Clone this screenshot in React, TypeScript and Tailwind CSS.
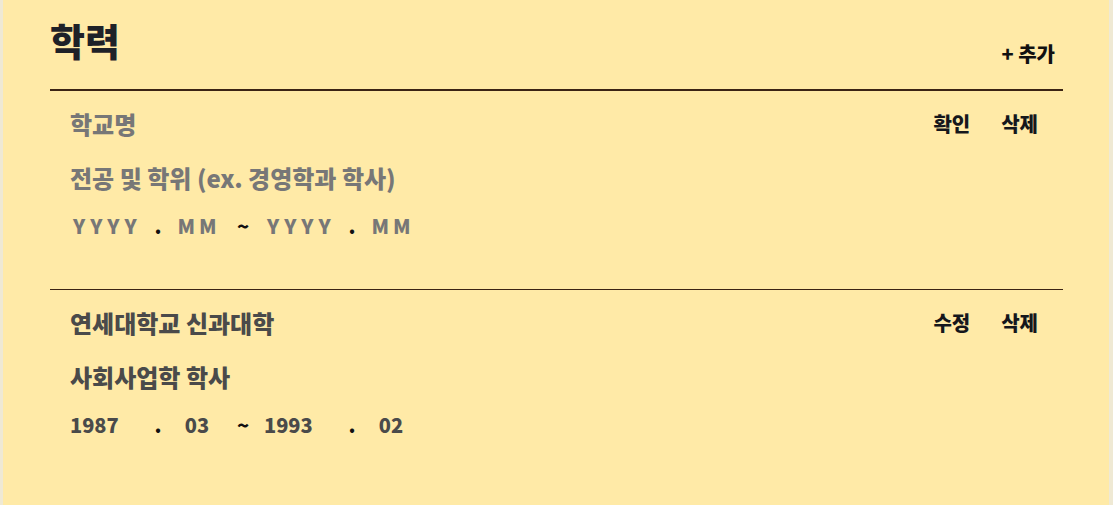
import React from "react";

const font = { fontFamily: '"Noto Sans CJK KR", "Noto Sans", sans-serif' };

function DateRow({ y1, m1, y2, m2, placeholder }: { y1: string; m1: string; y2: string; m2: string; placeholder?: boolean }) {
  const c = placeholder ? "text-[#777777] tracking-[5px] pl-[3px]" : "text-[#4a4a4a]";
  const m = placeholder ? "text-[#777777] tracking-[4px] pl-[4px]" : "text-[#4a4a4a]";
  return (
    <div className="flex items-center h-[30px] text-[20px] font-black leading-[30px]">
      <span className={`w-[78px] ${c}`}>{y1}</span>
      <span className="w-[20px] text-center text-[#111]">.</span>
      <span className={`w-[58px] text-center ${m}`}>{m1}</span>
      <span className="w-[38px] text-center text-[#111] pr-[4px]">~</span>
      <span className={`w-[78px] ${c}`}>{y2}</span>
      <span className="w-[20px] text-center text-[#111]">.</span>
      <span className={`w-[58px] text-center ${m}`}>{m2}</span>
    </div>
  );
}

function Entry({
  school,
  major,
  placeholder,
  action,
  dates,
  pb,
}: {
  school: string;
  major: string;
  placeholder?: boolean;
  action: string;
  dates: [string, string, string, string];
  pb: string;
}) {
  const col = placeholder ? "text-[#777777]" : "text-[#4a4a4a]";
  return (
    <div className={`pl-[20px] pr-[25px] pt-[18px] ${pb}`}>
      <div className="flex items-center justify-between h-[30px]">
        <span className={`text-[24px] font-black leading-[30px] ${col}`}>{school}</span>
        <div className="flex items-center gap-[31px] text-[20px] font-black text-[#15171c]">
          <span>{action}</span>
          <span>삭제</span>
        </div>
      </div>
      <div className={`mt-[24px] h-[30px] text-[24px] font-black leading-[30px] ${col}`}>{major}</div>
      <div className="mt-[18px]">
        <DateRow y1={dates[0]} m1={dates[1]} y2={dates[2]} m2={dates[3]} placeholder={placeholder} />
      </div>
    </div>
  );
}

export default function App() {
  return (
    <div
      style={font}
      className="w-full h-[505px] bg-[#ffeaa7] border-l-[3px] border-r-[4px] border-[#efe9d4] pl-[47px] pr-[46px] overflow-hidden"
    >
      <div className="flex justify-between h-[89px]">
        <h1 className="pt-[19px] text-[38px] font-black leading-[42px] text-[#1e2128]">학력</h1>
        <div className="self-end mb-[22px] mr-[8px] text-[20px] font-black leading-[26px] text-[#111]">+ 추가</div>
      </div>
      <div className="h-[2px] bg-[#3b2414]" />
      <Entry
        school="학교명"
        major="전공 및 학위 (ex. 경영학과 학사)"
        placeholder
        action="확인"
        dates={["YYYY", "MM", "YYYY", "MM"]}
        pb="pb-[48px]"
      />
      <div className="h-[1px] bg-[#3b2414]" />
      <Entry
        school="연세대학교 신과대학"
        major="사회사업학 학사"
        action="수정"
        dates={["1987", "03", "1993", "02"]}
        pb="pb-[40px]"
      />
    </div>
  );
}
